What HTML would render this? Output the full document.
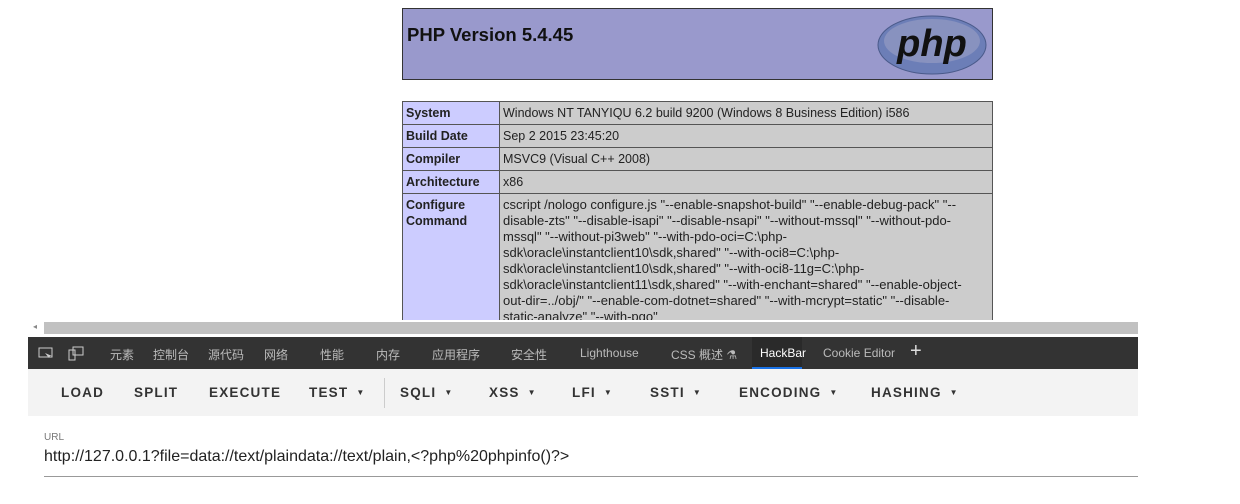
<!DOCTYPE html>
<html><head><meta charset="utf-8"><style>
*{margin:0;padding:0;box-sizing:border-box}
body{width:1240px;height:504px;background:#fff;position:relative;overflow:hidden;font-family:"Liberation Sans","Noto Sans CJK SC",sans-serif}
.abs{position:absolute}
#hdr{left:402px;top:8px;width:591px;height:72px;background:#9999cc;border:1px solid #333}
#hdr h1{position:absolute;left:4px;top:15px;font-size:18.5px;font-weight:bold;color:#111}
#logo{position:absolute;right:4px;top:6px}
table{position:absolute;left:402px;top:101px;width:591px;border-collapse:collapse;font-size:12.5px;color:#222}
td{border:1px solid #555;padding:3px 3px;vertical-align:top;line-height:16px;white-space:nowrap}
td.e{background:#ccccff;font-weight:bold;width:97px}
td.v{background:#cccccc}
#clip{position:absolute;left:0;top:0;width:1240px;height:320px;overflow:hidden}
#scroll{left:30px;top:320px;width:1108px;height:16px;background:#fff}
#scroll div{position:absolute;left:14px;top:2px;width:1094px;height:12px;background:#c1c1c1}
#dt{left:28px;top:337px;width:1110px;height:32px;background:#333;color:#bbb;font-size:12px}
#dt span{position:absolute;top:9px}
#tb{left:28px;top:369px;width:1110px;height:47px;background:#f3f3f3;font-size:13.5px;font-weight:bold;letter-spacing:1.2px;color:#333}
#tb span{position:absolute;top:16px}
.ar{font-size:8px;margin-left:8px;vertical-align:2px}
</style></head><body>
<div id="clip">
<div id="hdr" class="abs"><h1>PHP Version 5.4.45</h1>
<svg id="logo" width="112" height="60" viewBox="0 0 112 60"><ellipse cx="56" cy="30" rx="54" ry="29" fill="#6c7eb7" stroke="#4a5a8a"/><ellipse cx="56" cy="26" rx="48" ry="22" fill="#8892bf"/><text x="56" y="41" text-anchor="middle" font-family="Liberation Sans" font-style="italic" font-weight="bold" font-size="38" fill="#111">php</text></svg></div>
<table>
<tr><td class="e">System</td><td class="v">Windows NT TANYIQU 6.2 build 9200 (Windows 8 Business Edition) i586</td></tr>
<tr><td class="e">Build Date</td><td class="v">Sep 2 2015 23:45:20</td></tr>
<tr><td class="e">Compiler</td><td class="v">MSVC9 (Visual C++ 2008)</td></tr>
<tr><td class="e">Architecture</td><td class="v">x86</td></tr>
<tr><td class="e">Configure<br>Command</td><td class="v" style="font-size:13px">cscript /nologo configure.js "--enable-snapshot-build" "--enable-debug-pack" "--<br>disable-zts" "--disable-isapi" "--disable-nsapi" "--without-mssql" "--without-pdo-<br>mssql" "--without-pi3web" "--with-pdo-oci=C:\php-<br>sdk\oracle\instantclient10\sdk,shared" "--with-oci8=C:\php-<br>sdk\oracle\instantclient10\sdk,shared" "--with-oci8-11g=C:\php-<br>sdk\oracle\instantclient11\sdk,shared" "--with-enchant=shared" "--enable-object-<br>out-dir=../obj/" "--enable-com-dotnet=shared" "--with-mcrypt=static" "--disable-<br>static-analyze" "--with-pgo"</td></tr>
</table>
</div>
<div id="scroll" class="abs"><span style="position:absolute;left:3px;top:2px;font-size:8px;color:#888">◂</span><div></div></div>
<div id="dt" class="abs">
<svg class="abs" style="left:10px;top:10px" width="16" height="13"><rect x="1" y="1" width="13" height="9" fill="none" stroke="#ccc"/><path d="M7 6l4 5 1-2 2 0z" fill="#ccc"/></svg>
<svg class="abs" style="left:40px;top:9px" width="16" height="15"><rect x="1" y="4" width="6" height="10" fill="none" stroke="#ccc"/><rect x="5" y="1" width="10" height="8" fill="none" stroke="#ccc"/></svg>
<span style="left:82px">元素</span><span style="left:125px">控制台</span><span style="left:180px">源代码</span><span style="left:236px">网络</span><span style="left:292px">性能</span><span style="left:348px">内存</span><span style="left:404px">应用程序</span><span style="left:483px">安全性</span><span style="left:552px">Lighthouse</span><span style="left:643px">CSS 概述 ⚗</span>
<div class="abs" style="left:724px;top:0;width:50px;height:32px;background:#2a2a2a;border-bottom:2px solid #1a73e8"></div>
<span style="left:732px;color:#fff">HackBar</span><span style="left:795px">Cookie Editor</span><span style="left:882px;top:3px;font-size:20px;color:#ddd">+</span>
</div>
<div id="tb" class="abs">
<span style="left:33px">LOAD</span><span style="left:106px">SPLIT</span><span style="left:181px">EXECUTE</span><span style="left:281px">TEST<b class="ar">▼</b></span>
<div class="abs" style="left:356px;top:9px;width:1px;height:30px;background:#ccc"></div>
<span style="left:372px">SQLI<b class="ar">▼</b></span><span style="left:461px">XSS<b class="ar">▼</b></span><span style="left:544px">LFI<b class="ar">▼</b></span><span style="left:622px">SSTI<b class="ar">▼</b></span><span style="left:711px">ENCODING<b class="ar">▼</b></span><span style="left:843px">HASHING<b class="ar">▼</b></span>
</div>
<div class="abs" style="left:44px;top:432px;font-size:10px;color:#777">URL</div>
<div class="abs" style="left:44px;top:448px;font-size:16px;color:#222">http://127.0.0.1?file=data://text/plaindata://text/plain,&lt;?php%20phpinfo()?&gt;</div>
<div class="abs" style="left:44px;top:476px;width:1094px;height:1px;background:#999"></div>
</body></html>
